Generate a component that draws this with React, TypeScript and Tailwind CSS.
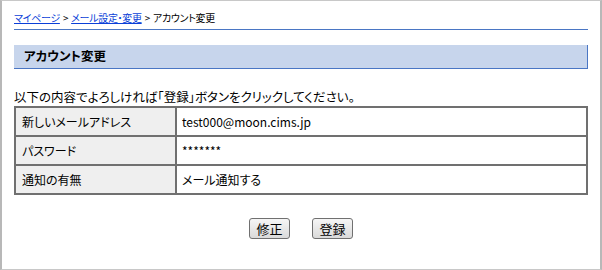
import React from "react";

const rows = [
  { label: "新しいメールアドレス", value: "test000@moon.cims.jp" },
  { label: "パスワード", value: "*******" },
  { label: "通知の有無", value: "メール通知する" },
];

function PushButton({ children }: { children: React.ReactNode }) {
  return (
    <button
      type="button"
      className="h-[21px] w-[41px] rounded-[3px] border border-[#707070] bg-gradient-to-b from-[#f6f6f6] to-[#dadada] text-[13px] leading-[19px] text-black"
    >
      {children}
    </button>
  );
}

export default function App() {
  return (
    <div
      className="h-[270px] w-[602px] border-x-2 border-y border-x-[#b8b8b8] border-y-[#c8c8c8] bg-white px-3 text-black [font-feature-settings:'palt']"
      style={{ fontFamily: '"Noto Sans CJK JP", "Liberation Sans", sans-serif' }}
    >
      {/* breadcrumb */}
      <div className="border-b border-[#4a76c4] pb-[4px] pt-[10px] text-[10px] leading-[14px] tracking-[-0.3px]">
        <a href="#" className="text-[#0b3fd8] underline">マイページ</a>
        <span className="mx-[3px]">&gt;</span>
        <a href="#" className="text-[#0b3fd8] underline">メール設定・変更</a>
        <span className="mx-[3px]">&gt;</span>
        <span>アカウント変更</span>
      </div>

      {/* section title */}
      <div className="mt-[15px] flex h-[24px] items-center border-b border-r border-[#4a76c4] bg-[#c7d5ec] pl-[10px] text-[12.5px] font-bold">
        アカウント変更
      </div>

      <p className="mt-[20px] text-[12.5px] leading-[16px]">
        以下の内容でよろしければ「登録」ボタンをクリックしてください。
      </p>

      <table className="mt-[1px] w-full border-collapse border-2 border-[#707070] text-[12px]">
        <tbody>
          {rows.map((r) => (
            <tr key={r.label} className="h-[29px]">
              <td className="w-[161px] border-2 border-[#707070] bg-[#efefef] pl-[6px]">{r.label}</td>
              <td className="border-2 border-[#707070] pl-[5px]">{r.value}</td>
            </tr>
          ))}
        </tbody>
      </table>

      <div className="mt-[23px] flex justify-center gap-[22px]">
        <PushButton>修正</PushButton>
        <PushButton>登録</PushButton>
      </div>
    </div>
  );
}
